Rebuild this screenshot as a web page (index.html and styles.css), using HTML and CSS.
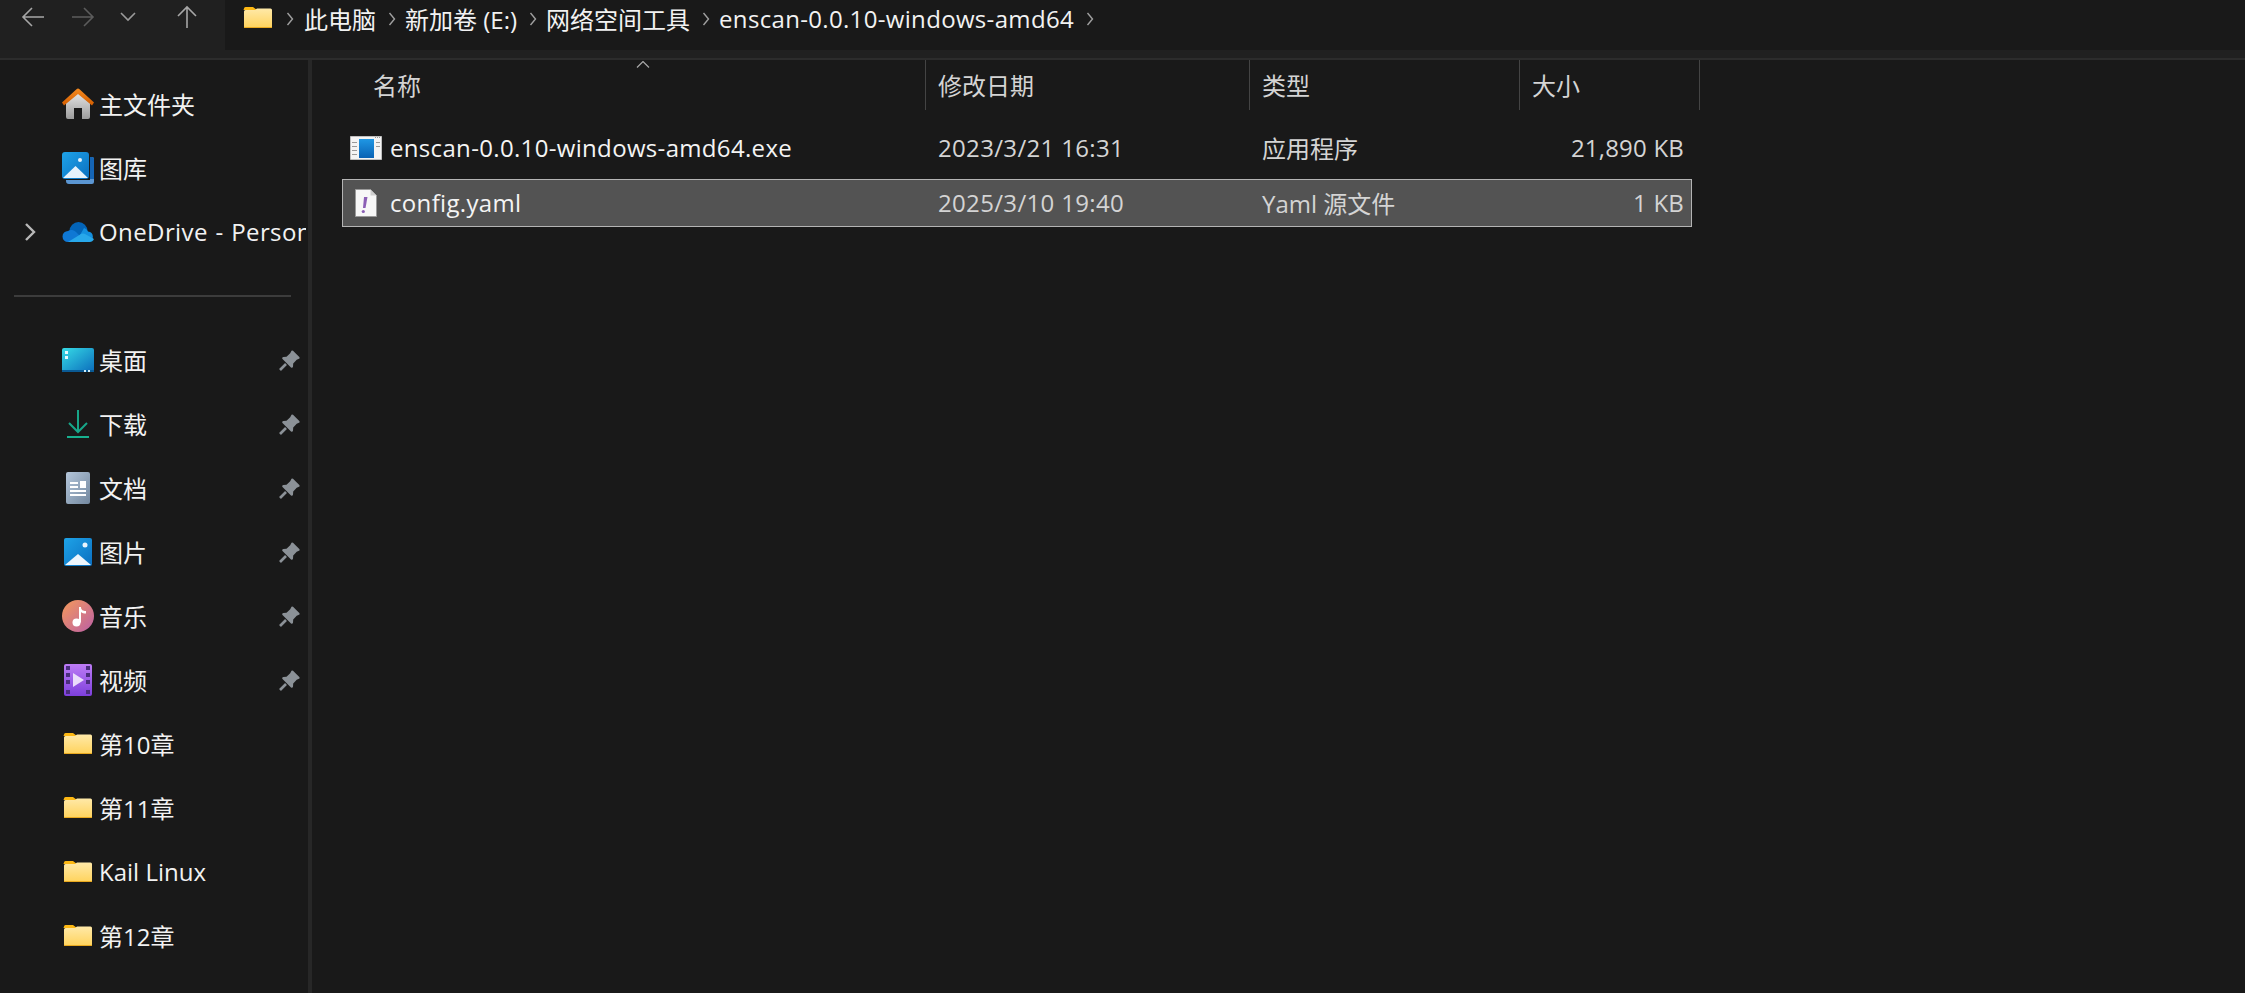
FILE: index.html
```html
<!DOCTYPE html>
<html lang="zh-CN">
  <head>
    <meta charset="UTF-8" />
    <title>enscan-0.0.10-windows-amd64</title>
    <link rel="stylesheet" href="styles.css">
  </head>

  <body>
    <svg class="defs" aria-hidden="true">
      <defs>
        <linearGradient id="g-folder" x1="0" y1="0" x2="0" y2="1"><stop offset="0" stop-color="#ffe9a8"/><stop offset="1" stop-color="#ffd35c"/></linearGradient>
        <linearGradient id="g-roof" x1="0" y1="0" x2="0" y2="1"><stop offset="0" stop-color="#f58a1f"/><stop offset="1" stop-color="#d35d00"/></linearGradient>
        <linearGradient id="g-wall" x1="0" y1="0" x2="0" y2="1"><stop offset="0" stop-color="#e4e4e4"/><stop offset="1" stop-color="#9c9c9c"/></linearGradient>
        <linearGradient id="g-pic" x1="0" y1="0" x2="1" y2="1"><stop offset="0" stop-color="#1ea3e8"/><stop offset="1" stop-color="#0b6fc0"/></linearGradient>
        <linearGradient id="g-desk" x1="0" y1="0" x2="1" y2="1"><stop offset="0" stop-color="#36dbe6"/><stop offset="1" stop-color="#0b6cbc"/></linearGradient>
        <linearGradient id="g-doc" x1="0" y1="0" x2="1" y2="1"><stop offset="0" stop-color="#b4c6da"/><stop offset="1" stop-color="#73889f"/></linearGradient>
        <linearGradient id="g-music" x1="0" y1="0" x2="1" y2="1"><stop offset="0" stop-color="#f59a5a"/><stop offset="1" stop-color="#bb5fa6"/></linearGradient>
        <linearGradient id="g-video" x1="0" y1="0" x2="0" y2="1"><stop offset="0" stop-color="#bd7cf5"/><stop offset="1" stop-color="#7d3fdc"/></linearGradient>
        <linearGradient id="g-exe" x1="0" y1="0" x2="0" y2="1"><stop offset="0" stop-color="#1f97e4"/><stop offset="1" stop-color="#0a62b4"/></linearGradient>
        <symbol id="i-folder" viewBox="0 0 32 32">
          <path d="M2 6.500a1.500 1.500 0 0 1 1.500-1.500h7.500l4 3h-13.500z" fill="#fdb813"/>
          <path d="M2 9.500a1.500 1.500 0 0 1 1.500-1.500h9.500l2-1.500h13.500a1.500 1.500 0 0 1 1.500 1.500v16.500a1.500 1.500 0 0 1-1.500 1.500h-25a1.500 1.500 0 0 1-1.500-1.500z" fill="url(#g-folder)"/>
          <rect x="2" y="25" width="28" height="1" fill="#e9a91f"/>
        </symbol>
        <symbol id="i-pin" viewBox="0 0 21 21">
          <path d="M12.500.800q.8-.6 1.500 0l6.300 6.300q.8 1 -.3 1.700l-2.300 1-3.500 3.700-.2 3.200q-.5 1.800-2 .8l-8.500-8.500q-1-1.500.8-2l3.200-.2 3.700-3.500z" fill="#8b9197"/>
          <path d="M7 14l-6 6" stroke="#8b9197" stroke-width="2.600" fill="none"/>
        </symbol>
      </defs>
    </svg>

    <header class="topbar">
      <div class="nav-buttons">
        <svg class="nav-btn nav-back" viewBox="0 0 24 24"><path d="M23 12H2M11 3l-9 9 9 9"/></svg>
        <svg class="nav-btn nav-forward" viewBox="0 0 24 24"><path d="M1 12h21M13 3l9 9-9 9"/></svg>
        <svg class="nav-btn nav-down" viewBox="0 0 24 24"><path d="M5 8l7 7 7-7"/></svg>
        <svg class="nav-btn nav-up" viewBox="0 0 24 24"><path d="M12 23V2M3 11l9-9 9 9"/></svg>
      </div>
      <div class="address">
        <svg class="address-folder"><use href="#i-folder"/></svg>
        <svg class="crumb-sep first" viewBox="0 0 8 14"><path d="M1.500 1l5 6-5 6"/></svg>
        <span>此电脑</span>
        <svg class="crumb-sep" viewBox="0 0 8 14"><path d="M1.500 1l5 6-5 6"/></svg>
        <span>新加卷 (E:)</span>
        <svg class="crumb-sep" viewBox="0 0 8 14"><path d="M1.500 1l5 6-5 6"/></svg>
        <span>网络空间工具</span>
        <svg class="crumb-sep" viewBox="0 0 8 14"><path d="M1.500 1l5 6-5 6"/></svg>
        <span class="latin">enscan-0.0.10-windows-amd64</span>
        <svg class="crumb-sep" viewBox="0 0 8 14"><path d="M1.500 1l5 6-5 6"/></svg>
      </div>
    </header>
    <div class="top-strip"></div>

    <main class="main">
      <aside class="sidebar">
        <div class="side-item">
          <span class="expander"></span>
          <svg class="side-icon" viewBox="0 0 32 32">
            <path d="M4 15l12-10 12 10v14a2 2 0 0 1-2 2h-6V20h-8v11H6a2 2 0 0 1-2-2z" fill="url(#g-wall)"/>
            <path d="M0 14.500L14.500 1.200a2.200 2.200 0 0 1 3 0L32 14.500 30 17.500 16 6 2 17.500z" fill="url(#g-roof)"/>
          </svg>
          <span class="side-label">主文件夹</span>
        </div>
        <div class="side-item">
          <span class="expander"></span>
          <svg class="side-icon" viewBox="0 0 32 32">
            <path d="M28 5h2a2 2 0 0 1 2 2v23a2 2 0 0 1-2 2H7a3 3 0 0 1-3-3v-1h24z" fill="#5b96d2"/>
            <path d="M28 5h2a2 2 0 0 1 2 2v20h-4z" fill="#1565b5"/>
            <rect width="27" height="27" rx="3" fill="url(#g-pic)"/>
            <circle cx="18" cy="8" r="2" fill="#e8f4fd"/>
            <path d="M1 26L13.500 14 26 26z" fill="#e6f2fc"/>
          </svg>
          <span class="side-label">图库</span>
        </div>
        <div class="side-item">
          <span class="expander">
            <svg class="expander-arrow" viewBox="0 0 12 20"><path d="M2 2l8 8-8 8"/></svg>
          </span>
          <svg class="side-icon" viewBox="0 0 32 32">
            <circle cx="16.500" cy="15" r="9" fill="#0364b8"/>
            <path d="M6 26a5.500 5.500 0 0 1 0-11 6 6 0 0 1 8 1l10 10z" fill="#0f78d4"/>
            <path d="M22 12a6.500 6.500 0 0 1 4 3.500 5.300 5.300 0 0 1 .5 10.500H14z" fill="#1490df"/>
            <path d="M6 26l13-8q2-1 4 0l9 5a5 5 0 0 1-5 3z" fill="#28a8ea"/>
          </svg>
          <span class="side-label onedrive">OneDrive - Personal</span>
        </div>
        <div class="side-item">
          <div class="side-rule"></div>
        </div>
        <div class="side-item">
          <span class="expander"></span>
          <svg class="side-icon" viewBox="0 0 32 32">
            <rect y="4" width="32" height="24" rx="2" fill="url(#g-desk)"/>
            <rect y="26" width="32" height="2" fill="#0a5a94"/>
            <rect x="3" y="7" width="3" height="3" fill="#e8fbff"/>
            <rect x="3" y="12" width="3" height="3" fill="#e8fbff"/>
            <rect x="22" y="26" width="2" height="2" fill="#cfeefa"/>
            <rect x="26" y="26" width="2" height="2" fill="#cfeefa"/>
          </svg>
          <span class="side-label">桌面</span>
          <svg class="pin"><use href="#i-pin"/></svg>
        </div>
        <div class="side-item">
          <span class="expander"></span>
          <svg class="side-icon" viewBox="0 0 32 32">
            <path d="M16 2v22M7 15l9 9 9-9" fill="none" stroke="#17a689" stroke-width="2"/>
            <rect x="5" y="28" width="22" height="2" fill="#17b08f"/>
          </svg>
          <span class="side-label">下载</span>
          <svg class="pin"><use href="#i-pin"/></svg>
        </div>
        <div class="side-item">
          <span class="expander"></span>
          <svg class="side-icon" viewBox="0 0 32 32">
            <rect x="4" width="24" height="32" rx="2" fill="url(#g-doc)"/>
            <rect x="8" y="10" width="8" height="2" fill="#fff"/>
            <rect x="8" y="14" width="8" height="2" fill="#fff"/>
            <rect x="18" y="9" width="6" height="7" fill="#fff"/>
            <rect x="8" y="18" width="16" height="2" fill="#fff"/>
            <rect x="8" y="22" width="16" height="2" fill="#fff"/>
          </svg>
          <span class="side-label">文档</span>
          <svg class="pin"><use href="#i-pin"/></svg>
        </div>
        <div class="side-item">
          <span class="expander"></span>
          <svg class="side-icon" viewBox="0 0 32 32">
            <rect x="2" y="2" width="28" height="28" rx="2" fill="url(#g-pic)"/>
            <circle cx="23" cy="9" r="2.500" fill="#e8f4fd"/>
            <path d="M3 29l13-11 13 11z" fill="#eef6fd"/>
          </svg>
          <span class="side-label">图片</span>
          <svg class="pin"><use href="#i-pin"/></svg>
        </div>
        <div class="side-item">
          <span class="expander"></span>
          <svg class="side-icon" viewBox="0 0 32 32">
            <circle cx="16" cy="16" r="16" fill="url(#g-music)"/>
            <path d="M17 7h2c0 3 2 4 5 4v2.500c-2 0-4-.500-5-1.500v10.500h-2z" fill="#fff"/>
            <circle cx="14.500" cy="22.500" r="4" fill="#fff"/>
          </svg>
          <span class="side-label">音乐</span>
          <svg class="pin"><use href="#i-pin"/></svg>
        </div>
        <div class="side-item">
          <span class="expander"></span>
          <svg class="side-icon" viewBox="0 0 32 32">
            <rect x="2" width="28" height="32" rx="2" fill="url(#g-video)"/>
            <g fill="#4a2d7d">
              <rect x="4" y="2" width="4" height="4"/><rect x="4" y="9" width="4" height="4"/><rect x="4" y="16" width="4" height="4"/><rect x="4" y="26" width="4" height="4"/>
              <rect x="24" y="2" width="4" height="4"/><rect x="24" y="9" width="4" height="4"/><rect x="24" y="16" width="4" height="4"/><rect x="24" y="26" width="4" height="4"/>
            </g>
            <path d="M11 9l11 7-11 7z" fill="#eadcfb"/>
          </svg>
          <span class="side-label">视频</span>
          <svg class="pin"><use href="#i-pin"/></svg>
        </div>
        <div class="side-item">
          <span class="expander"></span>
          <svg class="side-icon"><use href="#i-folder"/></svg>
          <span class="side-label">第10章</span>
        </div>
        <div class="side-item">
          <span class="expander"></span>
          <svg class="side-icon"><use href="#i-folder"/></svg>
          <span class="side-label">第11章</span>
        </div>
        <div class="side-item">
          <span class="expander"></span>
          <svg class="side-icon"><use href="#i-folder"/></svg>
          <span class="side-label">Kail Linux</span>
        </div>
        <div class="side-item">
          <span class="expander"></span>
          <svg class="side-icon"><use href="#i-folder"/></svg>
          <span class="side-label">第12章</span>
        </div>
      </aside>

      <div class="side-divider"></div>

      <section class="files">
        <div class="columns">
          <div class="col-head col-name">名称
            <svg class="sort-caret" viewBox="0 0 14 7"><path d="M1 6.500l6-6 6 6"/></svg>
          </div>
          <div class="col-head">修改日期</div>
          <div class="col-head">类型</div>
          <div class="col-head">大小</div>
        </div>

        <div class="file-row">
          <div class="cell cell-name">
            <svg class="exe-icon" viewBox="0 0 32 24">
              <rect width="32" height="24" fill="#f4f4f4" stroke="#8a8a8a"/>
              <rect x="9" y="3" width="15" height="19" fill="url(#g-exe)"/>
              <g fill="#9a9a9a">
                <rect x="2" y="6" width="5" height="1"/><rect x="2" y="10" width="5" height="1"/><rect x="2" y="14" width="5" height="1"/><rect x="2" y="18" width="5" height="1"/>
                <rect x="26" y="6" width="4" height="1"/><rect x="26" y="10" width="4" height="1"/>
                <rect x="25" y="1" width="1" height="1"/><rect x="27" y="1" width="1" height="1"/><rect x="29" y="1" width="1" height="1"/>
              </g>
            </svg>
            <span class="file-name latin">enscan-0.0.10-windows-amd64.exe</span>
          </div>
          <div class="cell latin">2023/3/21 16:31</div>
          <div class="cell">应用程序</div>
          <div class="cell cell-size">21,890 KB</div>
        </div>

        <div class="file-row selected">
          <div class="cell cell-name">
            <svg class="yaml-icon" viewBox="0 0 22 28">
              <path d="M.500.500h15l6 6v21H.500z" fill="#f7f7f7" stroke="#9a9a9a"/>
              <path d="M15.500.500v6h6z" fill="#cfcfcf"/>
              <path d="M9 8h3.500l-2 11H8z" fill="#8b5fb5"/>
              <circle cx="8.300" cy="22.500" r="1.600" fill="#8b5fb5"/>
            </svg>
            <span class="file-name latin">config.yaml</span>
          </div>
          <div class="cell latin">2025/3/10 19:40</div>
          <div class="cell">Yaml 源文件</div>
          <div class="cell cell-size">1 KB</div>
        </div>
      </section>
    </main>
  </body>
</html>
```

FILE: styles.css
```css
* {
  box-sizing: border-box;
}

html,
body {
  height: 100%;
}

body {
  margin: 0;
  background-color: #191919;
  color: #f2f2f2;
  font-family: "Open Sans", "Noto Sans CJK SC", sans-serif;
  font-size: 24px;
  overflow: hidden;
}

.defs {
  position: absolute;
  width: 0;
  height: 0;
}

/* Open Sans runs a bit narrower than the text in the shot */
.latin {
  letter-spacing: 0.33px;
}

/* top bar */
.topbar {
  display: flex;
  height: 50px;
  background-color: #191919;
}

.nav-buttons {
  display: flex;
  align-items: center;
  width: 225px;
  padding: 0 0 16px 8px;
  background-color: #202020;
}

.nav-btn {
  width: 24px;
  height: 24px;
  margin: 0 13px;
  fill: none;
  stroke: #a6a6a6;
  stroke-width: 1.6;
}

.nav-forward {
  stroke: #5c5c5c;
}

.nav-down {
  margin: 0 8px;
  stroke: #9a9a9a;
}

.nav-up {
  margin-left: 27px;
}

.address {
  display: flex;
  align-items: center;
  padding: 0 0 14px 19px;
  white-space: nowrap;
}

.address-folder {
  flex: none;
  width: 32px;
  height: 32px;
  margin-left: -2px;
}

.crumb-sep {
  flex: none;
  width: 8px;
  height: 14px;
  margin: 2px 9px 0 12px;
  fill: none;
  stroke: #a0a0a0;
  stroke-width: 1.4;
}

.crumb-sep.first {
  margin-left: 12px;
  margin-right: 10px;
}

.top-strip {
  height: 10px;
  background-color: #202020;
  border-bottom: 2px solid #2c2c2c;
}

/* sidebar */
.main {
  display: flex;
  height: 933px;
}

.sidebar {
  flex: none;
  width: 308px;
  padding-top: 12px;
  overflow: hidden;
}

.side-item {
  display: flex;
  align-items: center;
  height: 64px;
  padding-right: 2px;
}

.expander {
  flex: none;
  display: flex;
  width: 62px;
  padding-left: 24px;
}

.expander-arrow {
  width: 12px;
  height: 20px;
  fill: none;
  stroke: #b8b8b8;
  stroke-width: 2.4;
}

.side-icon {
  flex: none;
  width: 32px;
  height: 32px;
  margin-right: 5px;
}

.side-label {
  flex: 1;
  padding-bottom: 2px;
  overflow: hidden;
  white-space: nowrap;
}

.onedrive {
  letter-spacing: 0.4px;
  word-spacing: 1px;
}

.pin {
  flex: none;
  width: 21px;
  height: 21px;
  margin-right: 6px;
}

.side-rule {
  width: 277px;
  height: 2px;
  margin-left: 14px;
  background-color: #3c3c3c;
}

.side-divider {
  flex: none;
  width: 4px;
  background-color: #272727;
}

/* file list */
.files {
  flex: 1;
  padding-left: 30px;
}

.columns {
  display: grid;
  grid-template-columns: 584px 324px 270px 180px;
  width: 1358px;
  height: 50px;
  margin-bottom: 14px;
}

.col-head {
  display: flex;
  align-items: center;
  padding: 0 0 1px 12px;
  border-right: 1px solid #444;
  color: #d4d4d4;
}

.col-name {
  position: relative;
  padding-left: 31px;
}

.sort-caret {
  position: absolute;
  top: 1px;
  left: 294px;
  width: 14px;
  height: 7px;
  fill: none;
  stroke: #a8a8a8;
  stroke-width: 1.2;
}

.file-row {
  display: grid;
  grid-template-columns: 583px 324px 270px 1fr;
  width: 1350px;
  height: 48px;
  margin-bottom: 7px;
  border: 1px solid transparent;
  color: #d4d4d4;
}

.file-row.selected {
  background-color: #535353;
  border-color: #b4b4b4;
}

.cell {
  display: flex;
  align-items: center;
  padding: 0 0 2px 12px;
  white-space: nowrap;
}

.cell-name {
  padding-left: 7px;
}

.cell-size {
  justify-content: flex-end;
  padding-right: 7px;
  letter-spacing: 0.2px;
}

.file-name {
  color: #f4f4f4;
}

.exe-icon {
  flex: none;
  width: 32px;
  height: 24px;
  margin: 2px 8px 0 0;
}

.yaml-icon {
  flex: none;
  width: 22px;
  height: 28px;
  margin: 2px 13px 0 5px;
}
```
